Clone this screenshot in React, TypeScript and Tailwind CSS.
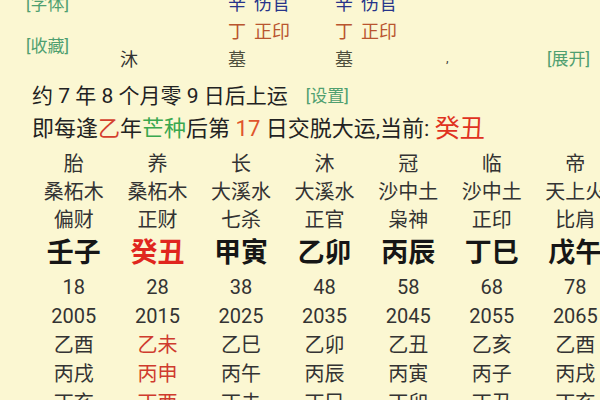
import React from "react";

const cols = 7;
const rows: { cells: string[]; big?: boolean; h: string }[] = [
  { cells: ["胎", "养", "长", "沐", "冠", "临", "帝"], h: "h-[28px]" },
  { cells: ["桑柘木", "桑柘木", "大溪水", "大溪水", "沙中土", "沙中土", "天上火"], h: "h-[28px]" },
  { cells: ["偏财", "正财", "七杀", "正官", "枭神", "正印", "比肩"], h: "h-[28px]" },
  { cells: ["壬子", "癸丑", "甲寅", "乙卯", "丙辰", "丁巳", "戊午"], big: true, h: "h-[38px]" },
  { cells: ["18", "28", "38", "48", "58", "68", "78"], h: "h-[29px]" },
  { cells: ["2005", "2015", "2025", "2035", "2045", "2055", "2065"], h: "h-[29px]" },
  { cells: ["乙酉", "乙未", "乙巳", "乙卯", "乙丑", "乙亥", "乙酉"], h: "h-[29px]" },
  { cells: ["丙戌", "丙申", "丙午", "丙辰", "丙寅", "丙子", "丙戌"], h: "h-[29px]" },
  { cells: ["丁亥", "丁酉", "丁未", "丁巳", "丁卯", "丁丑", "丁亥"], h: "h-[29px]" },
];

function cellClass(r: number, c: number, big?: boolean) {
  if (big) {
    return c === 1
      ? "text-[27px] font-bold text-[#e0261e]"
      : "text-[27px] font-bold text-[#161616]";
  }
  if (r >= 6 && c === 1) return "text-[20px] text-[#cf3b2e]";
  return "text-[20px] text-[#333333]";
}

export default function App() {
  return (
    <div className="w-[600px] h-[400px] overflow-hidden bg-[#fbf7d2] font-['Roboto','Noto_Sans_CJK_SC','Noto_Sans',sans-serif] leading-none">
      {/* top pillars section */}
      <div className="flex -mt-[10px] h-[83px]">
        <div className="w-[120px] pl-[26px] flex flex-col text-[17px] text-[#4f9f70]">
          <div className="h-[28px] flex items-center">[字体]</div>
          <div className="h-[28px] mt-[14px] flex items-center">[收藏]</div>
        </div>
        <div className="grid grid-cols-[108px_107px_105px_60px] grid-rows-[28px_28px_28px] text-[18px]">
          <div />
          <div className="flex items-center text-[#27348a]">辛<span className="ml-[8px]">伤官</span></div>
          <div className="flex items-center text-[#27348a]">辛<span className="ml-[8px]">伤官</span></div>
          <div />
          <div />
          <div className="flex items-center text-[#b9552f]">丁<span className="ml-[8px]">正印</span></div>
          <div className="flex items-center text-[#b9552f]">丁<span className="ml-[8px]">正印</span></div>
          <div />
          <div className="flex items-center text-[#333]">沐</div>
          <div className="flex items-center text-[#4d4e3c]">墓</div>
          <div className="flex items-center text-[#4d4e3c]">墓</div>
          <div className="flex items-start pt-[5px] pl-[6px] text-[13px] text-[#444]">,</div>
        </div>
        <div className="ml-auto self-end h-[28px] flex items-center pr-[10px] text-[17px] text-[#4f9f70]">[展开]</div>
      </div>

      {/* lines */}
      <div className="mt-[7px] h-[32px] pl-[32px] flex items-center text-[21px] text-[#222] whitespace-pre">
        <span>约 7 年 8 个月零 9 日后上运</span>
        <span className="ml-[18px] text-[17px] text-[#4f9f70]">[设置]</span>
      </div>
      <div className="h-[33px] pl-[32px] flex items-center text-[22px] text-[#222] whitespace-pre">
        <span>即每逢</span>
        <span className="text-[#d4402e]">乙</span>
        <span>年</span>
        <span className="text-[#3aa84f]">芒种</span>
        <span>后第 </span>
        <span className="text-[#e0552c]">17</span>
        <span> 日交脱大运,当前: </span>
        <span className="text-[25px] text-[#e0321f]">癸丑</span>
      </div>

      {/* table */}
      <div className="mt-[5px] pl-[32px]">
        {rows.map((row, r) => (
          <div key={r} className={`grid grid-cols-[repeat(7,83.6px)] ${row.h}`}>
            {row.cells.slice(0, cols).map((t, c) => (
              <div key={c} className={`flex items-center justify-center whitespace-nowrap ${cellClass(r, c, row.big)}`}>
                {t}
              </div>
            ))}
          </div>
        ))}
      </div>
    </div>
  );
}
